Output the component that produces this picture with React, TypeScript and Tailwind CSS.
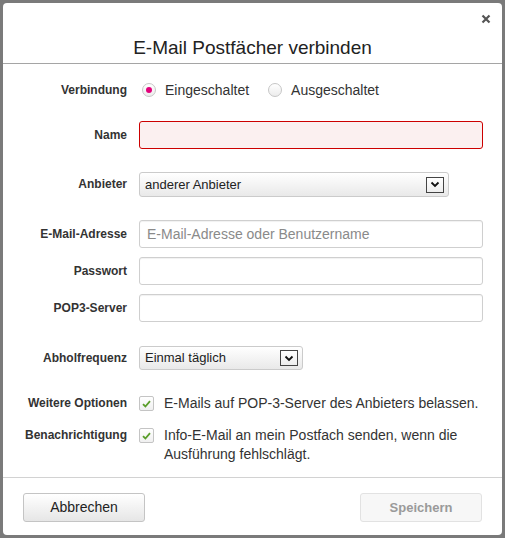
import React, { useState } from 'react';

const font = { fontFamily: '"Liberation Sans", Arial, sans-serif' };

function Label({ children }: { children: React.ReactNode }) {
    return (
        <div className="w-[124px] shrink-0 text-right text-[12px] font-bold text-[#333] leading-[19px]">
            {children}
        </div>
    );
}

function Radio({ checked, label, onClick }: { checked: boolean; label: string; onClick: () => void }) {
    return (
        <button type="button" onClick={onClick} className="flex items-center">
            <span className="w-[14px] h-[14px] rounded-full border border-[#c6c6c6] bg-gradient-to-b from-white to-[#ececec] flex items-center justify-center">
                {checked && <span className="w-[6px] h-[6px] rounded-full bg-[#e2007a]" />}
            </span>
            <span className="ml-[9px] text-[14px] text-[#333] leading-[19px]">{label}</span>
        </button>
    );
}

function Check({ checked, onClick }: { checked: boolean; onClick: () => void }) {
    return (
        <button type="button" onClick={onClick} className="mt-[2px] w-[15px] h-[15px] shrink-0 rounded-[2px] border border-[#c4c4c4] bg-gradient-to-b from-white to-[#f0f0f0] flex items-center justify-center">
            {checked && (
                <svg width="9" height="8" viewBox="0 0 9 8">
                    <path d="M1 4.2 L3.4 6.5 L8 1.2" fill="none" stroke="#5a9e2a" strokeWidth="1.8" />
                </svg>
            )}
        </button>
    );
}

function SelectBox({ value, width, height }: { value: string; width: string; height: string }) {
    return (
        <div className={`${width} ${height} rounded-[3px] border border-[#cbcbcb] bg-gradient-to-b from-white to-[#e9e9e9] flex items-center justify-between pl-[5px] pr-[4px]`}>
            <span className="text-[13px] text-[#222]">{value}</span>
            <span className="w-[18px] h-[16px] border border-[#444] bg-gradient-to-b from-white to-[#eee] flex items-center justify-center">
                <svg width="10" height="7" viewBox="0 0 10 7">
                    <path d="M1.5 1.5 L5 5 L8.5 1.5" fill="none" stroke="#111" strokeWidth="1.8" />
                </svg>
            </span>
        </div>
    );
}

const inputCls = 'w-[344px] h-[28px] rounded-[3px] border border-[#cfcfcf] bg-white shadow-[inset_0_1px_1px_rgba(0,0,0,0.06)] px-[7px] text-[14px] text-[#333] placeholder:text-[#8a8a8a] outline-none';

export default function App() {
    const [aktiv, setAktiv] = useState(true);
    const [belassen, setBelassen] = useState(true);
    const [info, setInfo] = useState(true);

    return (
        <div className="w-[505px] h-[538px] bg-[#7a7a7a] p-[3px]" style={font}>
            <div className="w-[499px] h-[532px] bg-white rounded-[4px] flex flex-col">
                {/* Kopfzeile */}
                <div className="relative h-[61px] border-b border-[#a5a5a5] shrink-0">
                    <button type="button" className="absolute right-[11px] top-[11px] w-[10px] h-[10px]">
                        <svg width="10" height="10" viewBox="0 0 10 10">
                            <path d="M1.5 1.5 L8.5 8.5 M8.5 1.5 L1.5 8.5" stroke="#555" strokeWidth="2.2" />
                        </svg>
                    </button>
                    <h1 className="pt-[34px] text-center text-[19px] leading-[22px] text-[#222]">E-Mail Postfächer verbinden</h1>
                </div>

                {/* Formular */}
                <div className="flex-1 flex flex-col">
                    <div className="flex items-center gap-[15px] mt-[16px] h-[20px]">
                        <Label>Verbindung</Label>
                        <div className="flex items-center gap-[19px]">
                            <Radio checked={aktiv} label="Eingeschaltet" onClick={() => setAktiv(true)} />
                            <Radio checked={!aktiv} label="Ausgeschaltet" onClick={() => setAktiv(false)} />
                        </div>
                    </div>

                    <div className="flex items-center gap-[12px] mt-[21px]">
                        <Label>Name</Label>
                        <input className="w-[344px] h-[28px] rounded-[3px] border border-[#cc0000] bg-[#fbf0f0] px-[7px] text-[14px] outline-none" />
                    </div>

                    <div className="flex items-center gap-[12px] mt-[23px]">
                        <Label>Anbieter</Label>
                        <SelectBox value="anderer Anbieter" width="w-[310px]" height="h-[25px]" />
                    </div>

                    <div className="flex items-center gap-[12px] mt-[23px]">
                        <Label>E-Mail-Adresse</Label>
                        <input className={inputCls} placeholder="E-Mail-Adresse oder Benutzername" />
                    </div>

                    <div className="flex items-center gap-[12px] mt-[9px]">
                        <Label>Passwort</Label>
                        <input type="password" className={inputCls} />
                    </div>

                    <div className="flex items-center gap-[12px] mt-[9px]">
                        <Label>POP3-Server</Label>
                        <input className={inputCls} />
                    </div>

                    <div className="flex items-center gap-[12px] mt-[24px]">
                        <Label>Abholfrequenz</Label>
                        <SelectBox value="Einmal täglich" width="w-[164px]" height="h-[24px]" />
                    </div>

                    <div className="flex items-start gap-[12px] mt-[24px]">
                        <Label>Weitere Optionen</Label>
                        <Check checked={belassen} onClick={() => setBelassen(!belassen)} />
                        <span className="-ml-[2px] text-[14px] leading-[19px] text-[#333]">E-Mails auf POP-3-Server des Anbieters belassen.</span>
                    </div>

                    <div className="flex items-start gap-[12px] mt-[13px]">
                        <Label>Benachrichtigung</Label>
                        <Check checked={info} onClick={() => setInfo(!info)} />
                        <span className="-ml-[2px] w-[330px] text-[14px] leading-[19px] text-[#333]">
                            Info-E-Mail an mein Postfach senden, wenn die Ausführung fehlschlägt.
                        </span>
                    </div>
                </div>

                {/* Fußzeile */}
                <div className="border-t border-[#d2d2d2] pt-[15px] pb-[13px] px-[20px] flex justify-between shrink-0">
                    <button type="button" className="w-[122px] h-[29px] rounded-[3px] border border-[#c4c4c4] bg-gradient-to-b from-white to-[#e6e6e6] text-[14px] text-[#222]">
                        Abbrechen
                    </button>
                    <button type="button" disabled className="w-[122px] h-[29px] rounded-[3px] border border-[#e2e2e2] bg-[#f7f7f7] text-[13px] font-bold text-[#9a9a9a]">
                        Speichern
                    </button>
                </div>
            </div>
        </div>
    );
}
